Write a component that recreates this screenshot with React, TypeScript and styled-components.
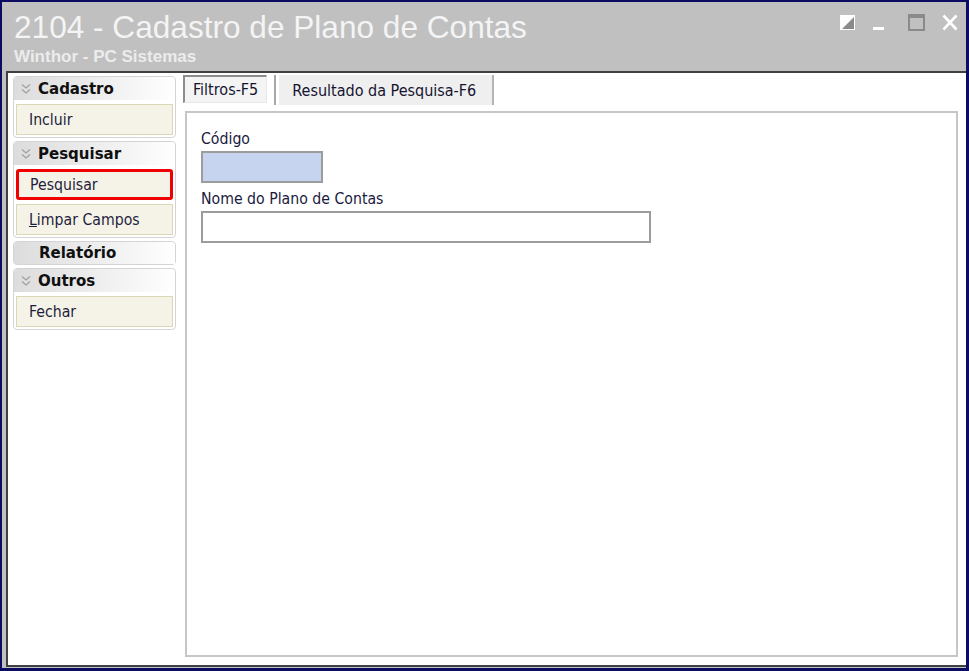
import React from 'react';
import styled, { createGlobalStyle } from 'styled-components';

const GlobalStyle = createGlobalStyle`
  html, body {
    margin: 0;
    padding: 0;
  }
  body {
    font-family: "DejaVu Sans Condensed", "DejaVu Sans", sans-serif;
    font-stretch: condensed;
  }
  * { box-sizing: border-box; }
`;

const Frame = styled.div`
  width: 969px;
  height: 671px;
  background: #c0c0c0;
  border-style: solid;
  border-color: #0b0b62;
  border-width: 2px 3px 3px 2px;
  display: flex;
  flex-direction: column;
`;

const TitleBar = styled.div`
  height: 69px;
  display: flex;
  justify-content: space-between;
  padding: 0 8px 0 12px;
`;

const TitleText = styled.div`
  display: flex;
  flex-direction: column;
`;

const Title = styled.div`
  font-family: "Liberation Sans", Arial, sans-serif;
  font-stretch: normal;
  font-size: 31.6px;
  line-height: 36px;
  margin-top: 7px;
  color: #f4f4f4;
`;

const Subtitle = styled.div`
  font-family: "Liberation Sans", Arial, sans-serif;
  font-stretch: normal;
  font-weight: bold;
  font-size: 17px;
  line-height: 20px;
  margin-top: 2px;
  color: #ececec;
`;

const WindowButtons = styled.div`
  display: flex;
  padding-top: 12px;
`;

const WinButton = styled.svg<{ $gap: number }>`
  margin-left: ${(p) => p.$gap}px;
`;

const Body = styled.div`
  flex: 1;
  margin-left: 4px;
  margin-bottom: 1px;
  background: #fff;
  border-style: solid;
  border-color: #404040;
  border-width: 2px 0 2px 2px;
  display: flex;
`;

const Sidebar = styled.div`
  width: 175px;
  padding: 3px 7px 0 5px;
  display: flex;
  flex-direction: column;
  gap: 3px;
`;

const Group = styled.div<{ $bare?: boolean }>`
  border: 1px solid #d4d4d4;
  border-radius: 4px;
  background: #fff;
  padding-bottom: ${(p) => (p.$bare ? '0' : '2px')};
  display: flex;
  flex-direction: column;
`;

const GroupHeader = styled.div<{ $bare?: boolean }>`
  height: ${(p) => (p.$bare ? '22px' : '23px')};
  display: flex;
  align-items: center;
  gap: 6px;
  padding-left: 6px;
  border-radius: 4px 4px 0 0;
  background: linear-gradient(to right, #dcdcdc, #f4f4f4 70%, #fff);
  font-family: "DejaVu Sans", sans-serif;
  font-stretch: normal;
  font-weight: bold;
  font-size: 15px;
  color: #101010;
`;

const Chevron = styled.svg`
  width: 12px;
  height: 12px;
`;

const HeaderLabel = styled.span<{ $indent?: boolean }>`
  margin-left: ${(p) => (p.$indent ? '19px' : '0')};
`;

const Item = styled.div<{ $marked?: boolean }>`
  height: 31px;
  margin: 4px 2px 0 2px;
  display: flex;
  align-items: center;
  padding-left: ${(p) => (p.$marked ? '11px' : '12px')};
  background: #f5f3e7;
  border: ${(p) => (p.$marked ? '3px solid #f00000' : '1px solid #dcd8b6')};
  border-radius: ${(p) => (p.$marked ? '3px' : '0')};
  font-size: 15.7px;
  color: #1e1e3c;
`;

const Main = styled.div`
  flex: 1;
  display: flex;
  flex-direction: column;
  padding: 2px 8px 8px 0;
`;

const Tabs = styled.div`
  display: flex;
  align-items: flex-start;
  height: 36px;
`;

const ActiveTab = styled.div`
  height: 28px;
  padding: 0 8px 0 8px;
  display: flex;
  align-items: center;
  background: #f4f4f4;
  border-style: solid;
  border-color: #8c8c8c #e8e8e8 #e8e8e8 #8c8c8c;
  border-width: 2px 1px 1px 2px;
  font-size: 16px;
  color: #141430;
`;

const TabSeparator = styled.div`
  width: 2px;
  height: 30px;
  margin: 0 3px 0 7px;
  background: #a8a8a8;
`;

const Tab = styled.div`
  height: 30px;
  padding: 0 16px 0 13px;
  display: flex;
  align-items: center;
  background: #efefef;
  border-right: 2px solid #b4b4b4;
  font-size: 16px;
  color: #141430;
`;

const Panel = styled.div`
  flex: 1;
  margin-left: 2px;
  border: 2px solid #c6c6c6;
  padding: 13px 14px;
  display: flex;
  flex-direction: column;
`;

const Label = styled.div`
  font-size: 15.7px;
  line-height: 25px;
  color: #1a1a40;
`;

const Field = styled.div<{ $width: number; $bg: string }>`
  width: ${(p) => p.$width}px;
  height: 32px;
  background: ${(p) => p.$bg};
  border: 2px solid #9c9c9c;
  margin-bottom: 3px;
`;

const ChevronIcon = () => (
  <Chevron viewBox="0 0 12 12">
    <path d="M2 1.5 L6 5 L10 1.5 M2 6.5 L6 10 L10 6.5" fill="none" stroke="#a0a0a0" strokeWidth="1.3" />
  </Chevron>
);

const groups: { title: string; items: string[] }[] = [
  { title: 'Cadastro', items: ['Incluir'] },
  { title: 'Pesquisar', items: ['Pesquisar', 'Limpar Campos'] },
  { title: 'Relatório', items: [] },
  { title: 'Outros', items: ['Fechar'] },
];

const App: React.FC = () => {
  return (
    <>
      <GlobalStyle />
      <Frame>
        <TitleBar>
          <TitleText>
            <Title>2104 - Cadastro de Plano de Contas</Title>
            <Subtitle>Winthor - PC Sistemas</Subtitle>
          </TitleText>
          <WindowButtons>
            <WinButton $gap={0} width="17" height="17" viewBox="0 0 17 17">
              <rect x="1" y="1" width="15" height="15" fill="#ffffff" />
              <polygon points="15,3 15,15 3,15" fill="#8a8a8a" />
            </WinButton>
            <WinButton $gap={17} width="11" height="17" viewBox="0 0 11 17">
              <rect x="0" y="13" width="11" height="3" fill="#ffffff" />
            </WinButton>
            <WinButton $gap={24} width="17" height="17" viewBox="0 0 17 17">
              <rect x="1" y="1" width="15" height="15" fill="none" stroke="#8a8a8a" strokeWidth="2" />
              <rect x="1" y="1" width="15" height="3" fill="#8a8a8a" />
            </WinButton>
            <WinButton $gap={17} width="16" height="17" viewBox="0 0 16 17">
              <path d="M1.5 1.5 L14.5 15.5 M14.5 1.5 L1.5 15.5" stroke="#ffffff" strokeWidth="2.6" />
            </WinButton>
          </WindowButtons>
        </TitleBar>
        <Body>
          <Sidebar>
            {groups.map((g) => {
              const bare = g.items.length === 0;
              return (
                <Group key={g.title} $bare={bare}>
                  <GroupHeader $bare={bare}>
                    {!bare && <ChevronIcon />}
                    <HeaderLabel $indent={bare}>{g.title}</HeaderLabel>
                  </GroupHeader>
                  {g.items.map((item, i) => (
                    <Item key={item} $marked={g.title === 'Pesquisar' && i === 0}>
                      {item === 'Limpar Campos' ? (
                        <span><u>L</u>impar Campos</span>
                      ) : (
                        item
                      )}
                    </Item>
                  ))}
                </Group>
              );
            })}
          </Sidebar>
          <Main>
            <Tabs>
              <ActiveTab>Filtros-F5</ActiveTab>
              <TabSeparator />
              <Tab>Resultado da Pesquisa-F6</Tab>
            </Tabs>
            <Panel>
              <Label>Código</Label>
              <Field $width={122} $bg="#c6d4ef" />
              <Label>Nome do Plano de Contas</Label>
              <Field $width={450} $bg="#ffffff" />
            </Panel>
          </Main>
        </Body>
      </Frame>
    </>
  );
};

export default App;
